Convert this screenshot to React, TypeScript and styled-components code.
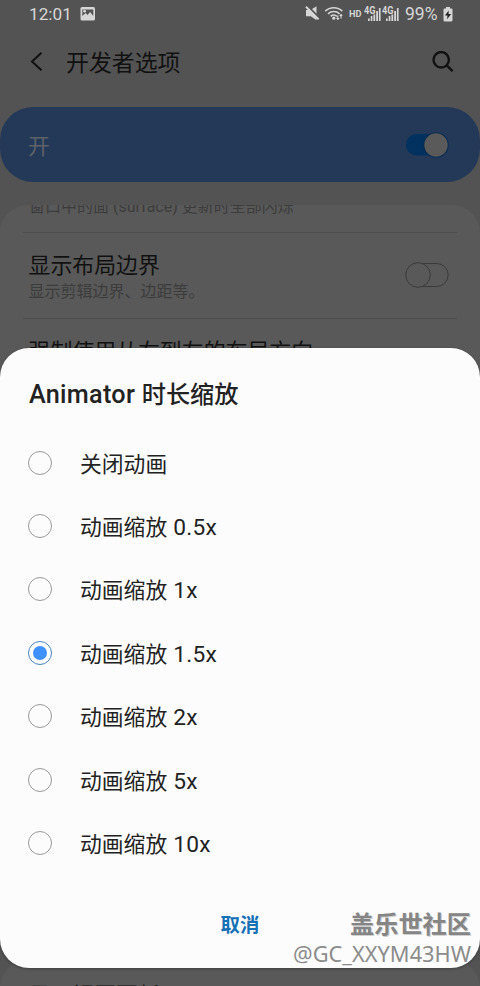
import React from 'react';
import styled, { createGlobalStyle } from 'styled-components';

const GlobalStyle = createGlobalStyle`
  * { box-sizing: border-box; }
  html, body { margin: 0; padding: 0; overflow: hidden; }
  body { font-family: Roboto, "Noto Sans CJK SC", sans-serif; background: #535353; }
`;

const Screen = styled.div`
  position: relative;
  width: 480px;
  height: 986px;
  overflow: hidden;
  background: #535353;
`;

const StatusBar = styled.div`
  display: flex;
  align-items: center;
  height: 28px;
  padding: 0 27px 0 29px;
  color: #d6d6d6;
  font-size: 17.5px;
  line-height: 29px;
`;

const Clock = styled.span`
  width: 42px;
  font-size: 17.2px;
`;

const StatusIcons = styled.svg`
  display: block;
  margin-left: auto;
`;

const PictureIcon = styled.svg`
  display: block;
  margin-left: 9px;
`;

const Percent = styled.span`
  width: 33px;
  margin-left: 5px;
  white-space: nowrap;
`;

const BatteryIcon = styled.svg`
  display: block;
  margin-left: 5px;
`;

const Header = styled.header`
  display: flex;
  align-items: center;
  height: 79px;
  padding: 0 26px 12px 30px;
`;

const HeaderTitle = styled.h1`
  flex: 1;
  margin: 0 0 0 22px;
  padding-top: 4px;
  font-size: 22.9px;
  font-weight: 400;
  line-height: 32px;
  color: #111;
`;

const MasterSwitch = styled.div`
  display: flex;
  align-items: center;
  justify-content: space-between;
  height: 75px;
  padding: 0 31px 0 28px;
  border-radius: 33px;
  background: #243958;
  color: #5d6268;
  font-size: 21.8px;
  line-height: 32px;
`;

const MasterLabel = styled.span`
  padding-top: 4px;
`;

const Card = styled.section<{ $gap: number }>`
  margin-top: ${(p) => p.$gap}px;
  border-radius: 28px;
  background: #595959;
  overflow: hidden;
`;

const ClippedSummary = styled.div`
  height: 27px;
  padding-left: 29px;
  font-size: 16px;
  line-height: 24px;
  color: #3c3c3c;
  overflow: hidden;
  white-space: nowrap;

  span { display: block; margin-top: -10px; }
`;

const Divider = styled.div`
  height: 1px;
  margin: 0 23px;
  background: #4d4d4d;
`;

const Setting = styled.div<{ $height: number; $top: number }>`
  display: flex;
  justify-content: space-between;
  height: ${(p) => p.$height}px;
  padding: ${(p) => p.$top}px 31px 0 28.5px;
`;

const SettingName = styled.div`
  font-size: 21.9px;
  line-height: 30px;
  color: #111;
  white-space: nowrap;
`;

const SettingSummary = styled.div`
  font-size: 16px;
  line-height: 22px;
  color: #3c3c3c;
`;

const Toggle = styled.svg<{ $top?: number }>`
  display: block;
  margin-top: ${(p) => p.$top ?? 0}px;
`;

const Dialog = styled.div`
  position: absolute;
  top: 348px;
  left: 0;
  width: 480px;
  height: 620px;
  display: flex;
  flex-direction: column;
  border-radius: 29px;
  background: #fcfcfc;
  box-shadow: 0 1px 3px rgba(0, 0, 0, 0.3);
`;

const DialogTitle = styled.h2`
  margin: 0;
  padding: 30px 28px 0 29px;
  height: 83px;
  font-size: 24.2px;
  font-weight: 500;
  line-height: 34px;
  color: #222;
  white-space: nowrap;
`;

const Latin = styled.span<{ $size: number }>`
  font-size: ${(p) => p.$size}px;
  line-height: 1;
  letter-spacing: 0.3px;
`;

const Options = styled.div`
  display: flex;
  flex-direction: column;
`;

const Option = styled.label`
  display: flex;
  align-items: center;
  gap: 28px;
  height: 63.4px;
  padding-left: 28px;
  font-size: 21.8px;
  line-height: 32px;
  color: #222;
`;

const OptionLabel = styled.span`
  padding-top: 4px;
  white-space: pre;
`;

const Radio = styled.span<{ $on: boolean }>`
  display: flex;
  align-items: center;
  justify-content: center;
  width: 24px;
  height: 24px;
  border: 1px solid ${(p) => (p.$on ? '#4684c4' : '#999')};
  border-radius: 50%;

  &::after {
    content: '';
    width: 14px;
    height: 14px;
    border-radius: 50%;
    background: ${(p) => (p.$on ? '#3e91ff' : 'transparent')};
  }
`;

const Cancel = styled.button`
  align-self: center;
  margin-top: 36px;
  padding: 0;
  border: 0;
  background: none;
  font: 700 19.4px/30px Roboto, "Noto Sans CJK SC", sans-serif;
  color: #1571b5;
`;

const Watermark = styled.div`
  position: absolute;
  right: 9px;
  top: 908px;
  text-align: right;
  font-family: "Noto Sans", "Noto Sans CJK SC", sans-serif;
  color: #858585;
  text-shadow: 1px 1px 0 #d0d0d0;
`;

const Community = styled.div`
  font-size: 24.2px;
  font-weight: 700;
  line-height: 32px;
`;

const Author = styled.div`
  font-size: 21.8px;
  line-height: 27px;
  color: #8c8c8c;
  text-shadow: none;
`;

const options = [
  { name: '关闭动画', scale: '' },
  { name: '动画缩放', scale: '0.5x' },
  { name: '动画缩放', scale: '1x' },
  { name: '动画缩放', scale: '1.5x' },
  { name: '动画缩放', scale: '2x' },
  { name: '动画缩放', scale: '5x' },
  { name: '动画缩放', scale: '10x' },
];

function StatusGlyphs() {
  return (
    <StatusIcons width="95" height="20" viewBox="305 4 95 20" fill="#d6d6d6">
      <path d="M306 10h4.500l6-3.800v14l-5.700-4H306z" />
      <path d="M307 5.500l13 13" stroke="#535353" strokeWidth="2" />
      <path d="M306 6.800l12.600 12.600" stroke="#d6d6d6" strokeWidth="2" />
      <g fill="none" stroke="#d6d6d6" strokeWidth="1.6">
        <path d="M325.3 11.1c4.7-4.5 12.3-4.5 17 0M328 13.8c3.2-3 8.4-3 11.6 0M330.7 16.4c1.8-1.7 4.5-1.7 6.2 0" />
        <path d="M337.8 15.5v4M341 14.5v4" strokeWidth="1.2" />
      </g>
      <circle cx="333.8" cy="18.2" r="1.6" />
      <path d="M336 18h3.6l-1.8 2.2zM339.2 16h3.6L341 13.8z" />
      <text x="349" y="17" fontSize="9" fontWeight="700" textLength="12.5" lengthAdjust="spacingAndGlyphs">HD</text>
      {[364, 382].map((x) => (
        <g key={x}>
          <text x={x} y="14" fontSize="10" fontWeight="700" textLength="11.5" lengthAdjust="spacingAndGlyphs">4G</text>
          <path transform={`translate(${x} 0)`} d="M4 18.500h1.700v2.500H4zM6.700 16h1.700v5H6.700zM9.400 14.500h1.800v6.500H9.400zM12.200 11h1.800v10h-1.800zM14.900 8h1.700v13h-1.700z" />
        </g>
      ))}
    </StatusIcons>
  );
}

export default function App() {
  return (
    <>
      <GlobalStyle />
      <Screen>
        <StatusBar>
          <Clock>12:01</Clock>
          <PictureIcon width="16" height="14" viewBox="0 0 16 14">
            <rect x="0.5" width="14.500" height="13.5" rx="1.5" fill="#d6d6d6" />
            <path d="M2.300 9V2.500h11v6.500l-3.200-4-2.600 3-2-2z" fill="#535353" />
            <circle cx="4.600" cy="4.200" r="1.4" fill="#d6d6d6" />
          </PictureIcon>
          <StatusGlyphs />
          <Percent>99%</Percent>
          <BatteryIcon width="10" height="15" viewBox="0 0 10 15">
            <path d="M3 0h4v1.500H8.500q1 0 1 1V13q0 1.500-1.500 1.500h-6Q.5 14.500 .5 13V2.500q0-1 1-1H3z" fill="#d6d6d6" />
            <path d="M5.700 3.500L2 8.500H4.500l-.4 3.700 4-5.200H5.500z" fill="#222" />
          </BatteryIcon>
        </StatusBar>
        <Header>
          <svg width="14" height="20" viewBox="0 0 14 20" fill="none" stroke="#111" strokeWidth="2">
            <path d="M11.500 .7L2 9.500l9.500 8.800" />
          </svg>
          <HeaderTitle>开发者选项</HeaderTitle>
          <svg width="22" height="22" viewBox="0 0 22 22" fill="none" stroke="#111" strokeWidth="2.400">
            <circle cx="9.200" cy="8.800" r="7.700" />
            <path d="M14.500 14.200l6 6" />
          </svg>
        </Header>
        <MasterSwitch>
          <MasterLabel>开</MasterLabel>
          <Toggle width="43" height="26" viewBox="0 0 43 26">
            <rect x="0" y="2" width="42" height="21.500" rx="10.700" fill="#00315f" />
            <circle cx="30" cy="13" r="12.700" fill="#072b50" />
            <circle cx="30" cy="13" r="11.700" fill="#5a5a5a" />
          </Toggle>
        </MasterSwitch>
        <Card $gap={23}>
          <ClippedSummary>
            <span>窗口中的面 (surface) 更新时全部闪烁</span>
          </ClippedSummary>
          <Divider />
          <Setting $height={85} $top={18}>
            <div>
              <SettingName>显示布局边界</SettingName>
              <SettingSummary>显示剪辑边界、边距等。</SettingSummary>
            </div>
            <Toggle $top={11} width="44" height="26" viewBox="0 0 44 26" fill="#595959" stroke="#3a3a3a">
              <rect x="3" y="1.500" width="40.200" height="23" rx="11.500" />
              <circle cx="13" cy="13" r="12.300" />
            </Toggle>
          </Setting>
          <Divider />
          <Setting $height={618} $top={18}>
            <SettingName>强制使用从右到左的布局方向</SettingName>
          </Setting>
        </Card>
        <Card $gap={23}>
          <Setting $height={80} $top={21}>
            <SettingName>显示视图更新</SettingName>
          </Setting>
        </Card>
        <Dialog role="dialog">
          <DialogTitle>
            <Latin $size={25.2}>Animator </Latin>时长缩放
          </DialogTitle>
          <Options>
            {options.map(({ name, scale }, i) => (
              <Option key={name + scale}>
                <Radio $on={i === 3} />
                <OptionLabel>
                  {name}
                  {scale && <Latin $size={22.7}>{` ${scale}`}</Latin>}
                </OptionLabel>
              </Option>
            ))}
          </Options>
          <Cancel>取消</Cancel>
        </Dialog>
        <Watermark>
          <Community>盖乐世社区</Community>
          <Author>@GC_XXYM43HW</Author>
        </Watermark>
      </Screen>
    </>
  );
}
